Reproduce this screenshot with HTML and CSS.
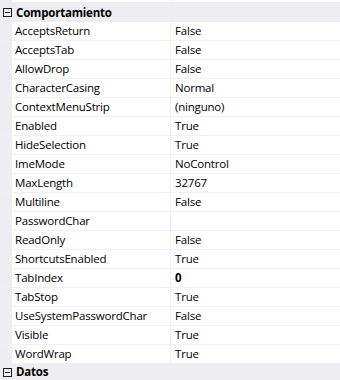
FILE: index.html
```html
<!DOCTYPE html>
<html lang="es">
<head>
    <meta charset="UTF-8">
    <title>Propiedades</title>
    <link rel="stylesheet" href="styles.css">
</head>
<body>
    <div class="grid">
        <div class="row top-edge">
            <div class="margin"></div>
            <div class="name"></div>
            <div class="value"></div>
        </div>

        <div class="category">
            <span class="toggle"><svg width="9" height="9" viewBox="0 0 9 9"><rect x="0.5" y="0.5" width="8" height="8" fill="none" stroke="#1e1e1e"/><path d="M2 4.5h5" stroke="#1e1e1e"/></svg></span>
            <span class="cat-title">Comportamiento</span>
        </div>

        <div class="row"><div class="margin"></div><div class="name">AcceptsReturn</div><div class="value">False</div></div>
        <div class="row"><div class="margin"></div><div class="name">AcceptsTab</div><div class="value">False</div></div>
        <div class="row"><div class="margin"></div><div class="name">AllowDrop</div><div class="value">False</div></div>
        <div class="row"><div class="margin"></div><div class="name">CharacterCasing</div><div class="value">Normal</div></div>
        <div class="row"><div class="margin"></div><div class="name">ContextMenuStrip</div><div class="value">(ninguno)</div></div>
        <div class="row"><div class="margin"></div><div class="name">Enabled</div><div class="value">True</div></div>
        <div class="row"><div class="margin"></div><div class="name">HideSelection</div><div class="value">True</div></div>
        <div class="row"><div class="margin"></div><div class="name">ImeMode</div><div class="value">NoControl</div></div>
        <div class="row"><div class="margin"></div><div class="name">MaxLength</div><div class="value">32767</div></div>
        <div class="row"><div class="margin"></div><div class="name">Multiline</div><div class="value">False</div></div>
        <div class="row"><div class="margin"></div><div class="name">PasswordChar</div><div class="value"></div></div>
        <div class="row"><div class="margin"></div><div class="name">ReadOnly</div><div class="value">False</div></div>
        <div class="row"><div class="margin"></div><div class="name">ShortcutsEnabled</div><div class="value">True</div></div>
        <div class="row"><div class="margin"></div><div class="name">TabIndex</div><div class="value changed">0</div></div>
        <div class="row"><div class="margin"></div><div class="name">TabStop</div><div class="value">True</div></div>
        <div class="row"><div class="margin"></div><div class="name">UseSystemPasswordChar</div><div class="value">False</div></div>
        <div class="row"><div class="margin"></div><div class="name">Visible</div><div class="value">True</div></div>
        <div class="row"><div class="margin"></div><div class="name">WordWrap</div><div class="value">True</div></div>

        <div class="category last">
            <span class="toggle"><svg width="9" height="9" viewBox="0 0 9 9"><rect x="0.5" y="0.5" width="8" height="8" fill="none" stroke="#1e1e1e"/><path d="M2 4.5h5" stroke="#1e1e1e"/></svg></span>
            <span class="cat-title">Datos</span>
        </div>
    </div>
</body>
</html>
```

FILE: styles.css
```css
body {
    margin: 0;
    background-color: #eeeef2;
    font-family: "Open Sans", "Noto Sans", sans-serif;
    font-size: 11.5px;
    letter-spacing: -0.2px;
    color: #000000;
    overflow: hidden;
}
.grid {
    width: 340px;
}
.row {
    display: flex;
    height: 18px;
    border-bottom: 1px solid #f0f0f0;
}
.row.top-edge {
    height: 2px;
    border-bottom-color: #eeeef2;
}
.margin {
    width: 12px;
    flex-shrink: 0;
    background-color: #eeeef2;
}
.name {
    width: 159px;
    flex-shrink: 0;
    padding-left: 3px;
    box-sizing: border-box;
    background-color: #ffffff;
    border-right: 1px solid #f0f0f0;
    line-height: 18px;
    white-space: nowrap;
    overflow: hidden;
}
.value {
    flex: 1;
    padding-left: 4px;
    background-color: #ffffff;
    line-height: 18px;
    white-space: nowrap;
}
.value.changed {
    font-weight: bold;
}
.category {
    display: flex;
    align-items: center;
    height: 19px;
    background-color: #eeeef2;
}
.category.last {
    height: 16px;
}
.toggle {
    width: 16px;
    display: flex;
    padding-left: 3px;
    box-sizing: border-box;
}
.toggle svg {
    display: block;
}
.cat-title {
    font-weight: bold;
    line-height: 16px;
}
```
